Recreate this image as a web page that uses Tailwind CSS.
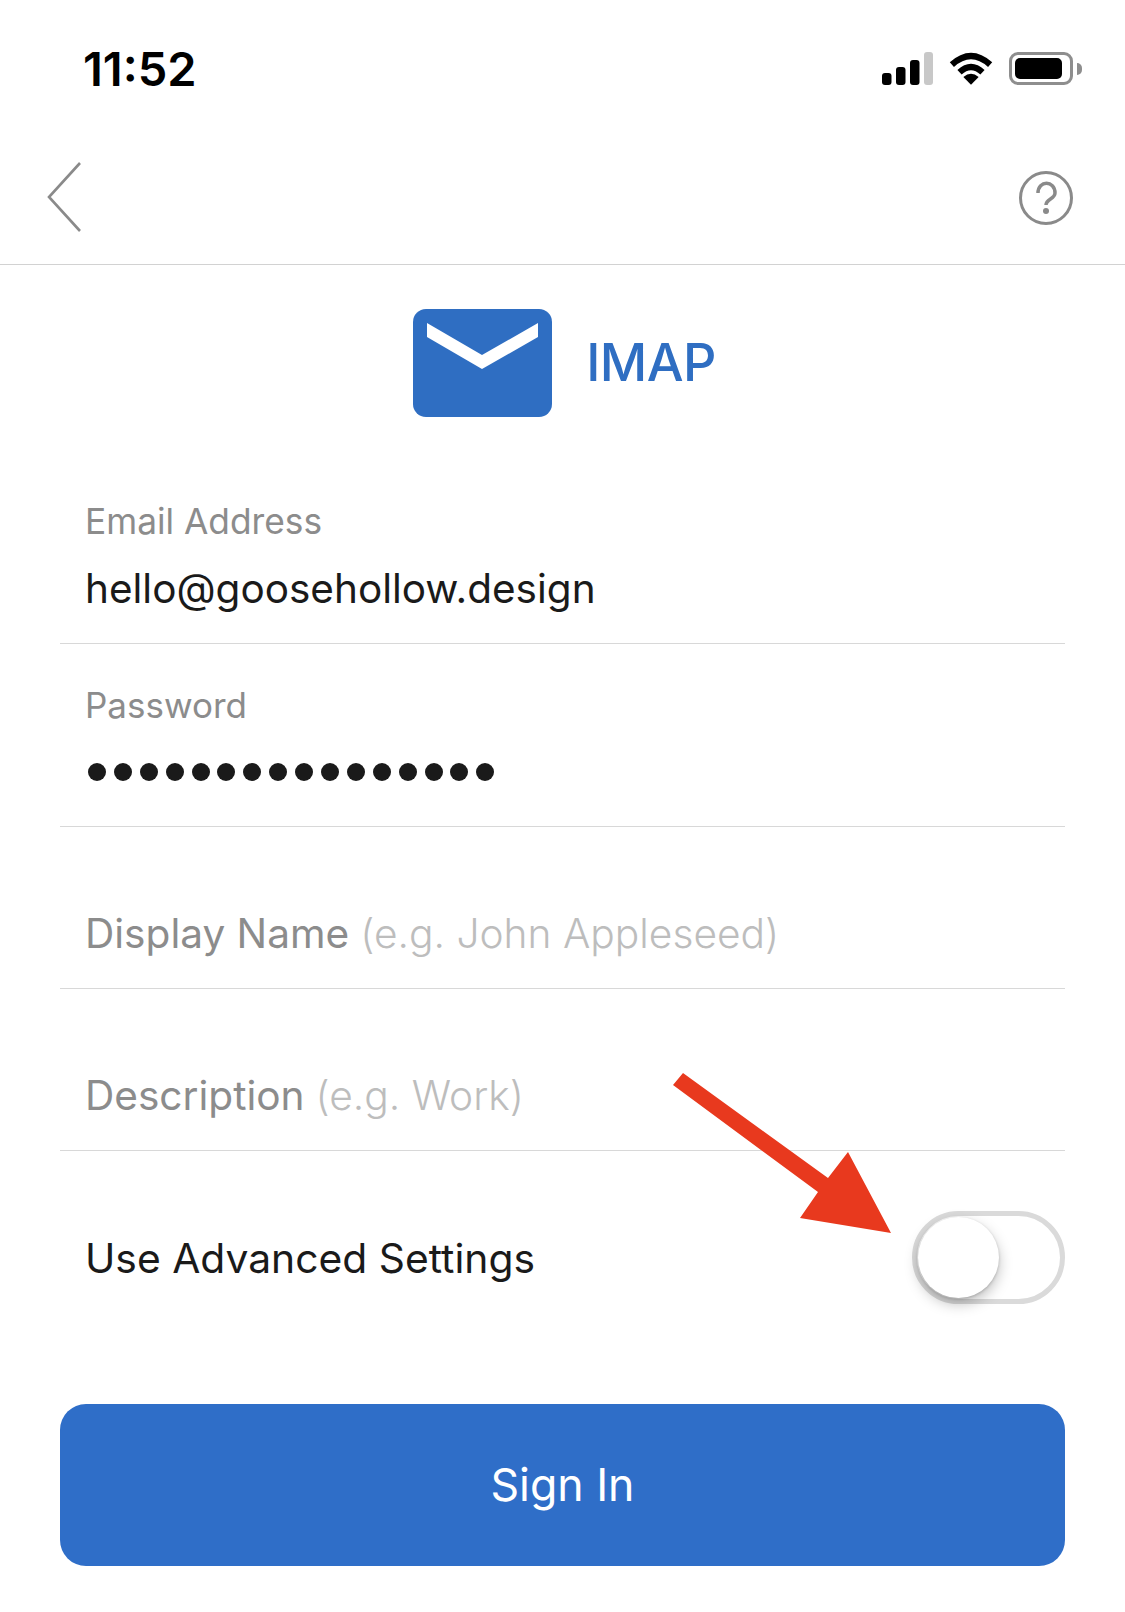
<!DOCTYPE html>
<html lang="en">
<head>
  <meta charset="UTF-8" />
  <title>IMAP</title>
  <script src="https://cdn.jsdelivr.net/npm/@tailwindcss/browser@4"></script>
</head>
<body class="bg-white h-[1612px] overflow-hidden font-['Inter',sans-serif]">
  <!-- status bar -->
  <div class="h-[138px] pl-[83px] pr-[43px] pt-[42px] flex items-start justify-between">
    <span class="text-[47px] leading-[54px] font-semibold text-black">11:52</span>
    <div class="flex items-center gap-[16px] pt-[10px]">
      <svg width="51" height="33" viewBox="0 0 51 33">
        <rect x="0" y="21" width="9.5" height="12" rx="3" fill="#000"/>
        <rect x="14" y="15" width="9.5" height="18" rx="3" fill="#000"/>
        <rect x="28" y="8" width="9.5" height="25" rx="3" fill="#000"/>
        <rect x="42" y="0" width="9" height="33" rx="3" fill="#c8c8c8"/>
      </svg>
      <svg width="44" height="33" viewBox="0 0 46 34">
        <path d="M3 13 Q23 -5 43 13" fill="none" stroke="#000" stroke-width="6.5"/>
        <path d="M11 21 Q23 10 35 21" fill="none" stroke="#000" stroke-width="6.5"/>
        <path d="M15 26 Q23 19 31 26 L23 34 Z" fill="#000"/>
      </svg>
      <div class="flex items-center">
        <div class="w-[64px] h-[33px] rounded-[9px] border-[3px] border-[#8e8e8e] p-[3px]">
          <div class="w-[47px] h-full bg-black rounded-[5px]"></div>
        </div>
        <div class="w-[5px] h-[12px] bg-[#8e8e8e] rounded-r-full ml-[4px]"></div>
      </div>
    </div>
  </div>

  <!-- nav -->
  <div class="h-[127px] border-b border-[#d2d2d2] pl-[46px] pr-[51px] flex items-start justify-between">
    <svg class="mt-[24px]" width="36" height="70" viewBox="0 0 36 70">
      <path d="M34 1 L3 35 L34 69" fill="none" stroke="#8a8a8a" stroke-width="2.6"/>
    </svg>
    <svg class="mt-[32px]" width="56" height="56" viewBox="0 0 56 56">
      <circle cx="28" cy="28" r="25.5" fill="none" stroke="#8a8a8a" stroke-width="3"/>
      <path d="M20 23 C20 10 37 10 37 23 C37 29 28 29 28 35" fill="none" stroke="#8a8a8a" stroke-width="3.5"/>
      <circle cx="28" cy="41" r="3" fill="#8a8a8a"/>
    </svg>
  </div>

  <!-- account type -->
  <div class="flex items-center justify-center gap-[34px] pt-[44px] pl-[4px]">
    <svg width="139" height="108" viewBox="0 0 139 108">
      <rect width="139" height="108" rx="13" fill="#2f6ec2"/>
      <path d="M14 14 L69 46 L125 14 L125 28 L69 60 L14 28 Z" fill="#fff"/>
    </svg>
    <span class="text-[52px] leading-[108px] font-medium tracking-[-0.6px] text-[#2f6ec2]">IMAP</span>
  </div>

  <!-- form -->
  <div class="px-[60px]">
    <div class="h-[227px] border-b border-[#d8d8d8] pl-[25px] flex flex-col justify-end pb-[29px]">
      <div class="text-[35.3px] leading-[42px] text-[#8c8c8c]">Email Address</div>
      <div class="mt-[21px] text-[40.5px] leading-[50px] text-[#1a1a1a]">hello@goosehollow.design</div>
    </div>
    <div class="h-[183px] border-b border-[#d8d8d8] pl-[25px] flex flex-col justify-end pb-[29px]">
      <div class="text-[35px] leading-[42px] text-[#8c8c8c]">Password</div>
      <div class="mt-[21px] h-[50px] flex items-center gap-[7.9px] pl-[3px]">
        <span class="w-[18px] h-[18px] rounded-full bg-[#1a1a1a]"></span>
        <span class="w-[18px] h-[18px] rounded-full bg-[#1a1a1a]"></span>
        <span class="w-[18px] h-[18px] rounded-full bg-[#1a1a1a]"></span>
        <span class="w-[18px] h-[18px] rounded-full bg-[#1a1a1a]"></span>
        <span class="w-[18px] h-[18px] rounded-full bg-[#1a1a1a]"></span>
        <span class="w-[18px] h-[18px] rounded-full bg-[#1a1a1a]"></span>
        <span class="w-[18px] h-[18px] rounded-full bg-[#1a1a1a]"></span>
        <span class="w-[18px] h-[18px] rounded-full bg-[#1a1a1a]"></span>
        <span class="w-[18px] h-[18px] rounded-full bg-[#1a1a1a]"></span>
        <span class="w-[18px] h-[18px] rounded-full bg-[#1a1a1a]"></span>
        <span class="w-[18px] h-[18px] rounded-full bg-[#1a1a1a]"></span>
        <span class="w-[18px] h-[18px] rounded-full bg-[#1a1a1a]"></span>
        <span class="w-[18px] h-[18px] rounded-full bg-[#1a1a1a]"></span>
        <span class="w-[18px] h-[18px] rounded-full bg-[#1a1a1a]"></span>
        <span class="w-[18px] h-[18px] rounded-full bg-[#1a1a1a]"></span>
        <span class="w-[18px] h-[18px] rounded-full bg-[#1a1a1a]"></span>
      </div>
    </div>
    <div class="h-[162px] border-b border-[#d8d8d8] pl-[25px] flex items-end pb-[29px] leading-[50px]">
      <span class="text-[40.6px] text-[#8c8c8c]">Display Name</span>
      <span class="ml-[11px] text-[40.7px] font-light text-[#bdbdbd]">(e.g. John Appleseed)</span>
    </div>
    <div class="h-[162px] border-b border-[#d8d8d8] pl-[25px] flex items-end pb-[29px] leading-[50px]">
      <span class="text-[40.6px] text-[#8c8c8c]">Description</span>
      <span class="ml-[11px] text-[40.7px] font-light text-[#bdbdbd]">(e.g. Work)</span>
    </div>
    <div class="h-[253px] pb-[40px] pl-[25px] flex items-center justify-between text-[40.8px] leading-[50px] text-[#1a1a1a]">
      <span>Use Advanced Settings</span>
      <div class="relative w-[153px] h-[93px] rounded-full border-[5px] border-[#dadada]">
        <div class="absolute left-[1px] top-[1px] w-[81px] h-[81px] rounded-full bg-white shadow-[0_6px_14px_rgba(0,0,0,0.25),0_1px_3px_rgba(0,0,0,0.2)]"></div>
      </div>
    </div>
    <button class="w-full h-[162px] rounded-[26px] bg-[#2f6ec8] text-white text-[44.6px] leading-[54px]">Sign In</button>
  </div>

  <!-- annotation arrow -->
  <svg class="absolute left-[670px] top-[1070px]" width="230" height="170" viewBox="0 0 230 170">
    <path d="M3 15 L13 3 L158 108 L178 82 L221 163 L130 148 L148 122 Z" fill="#e8391e"/>
  </svg>
</body>
</html>
